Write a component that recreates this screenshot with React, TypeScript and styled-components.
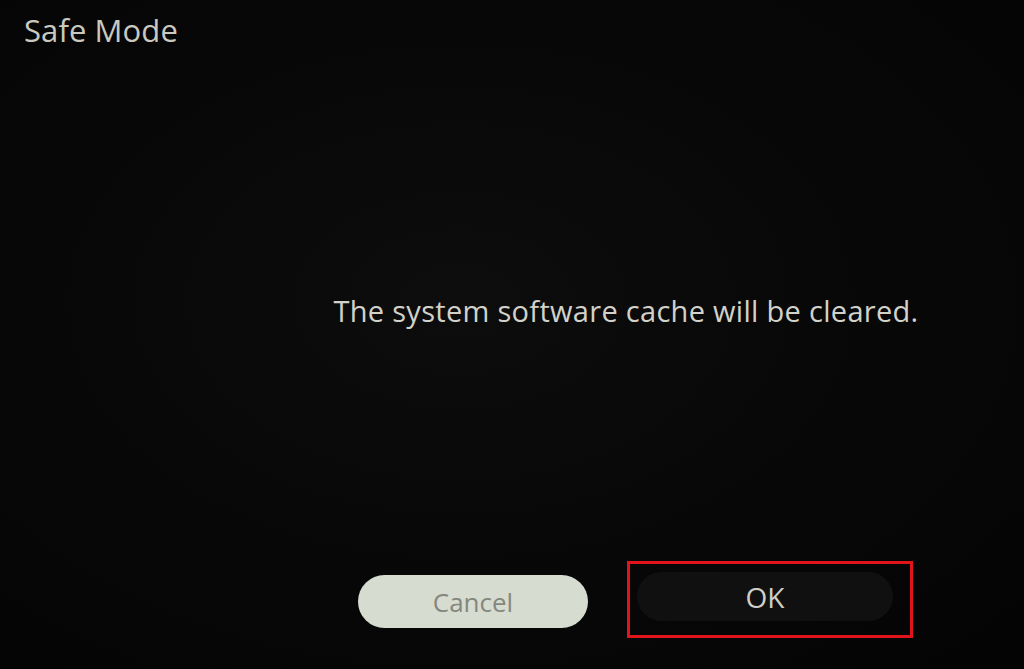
import React from "react"
import styled, { createGlobalStyle } from "styled-components"

const GlobalStyle = createGlobalStyle`
  html, body {
    margin: 0;
    padding: 0;
    background: #060606;
  }
  body {
    font-family: "Open Sans", "Noto Sans", sans-serif;
  }
`

const Screen = styled.div`
  position: relative;
  width: 1024px;
  height: 669px;
  overflow: hidden;
  background: radial-gradient(ellipse at 45% 45%, #0d0d0d 0%, #080808 45%, #040404 100%);
  display: grid;
  grid-template-columns: 228px 1fr;
  grid-template-rows: 64px 1fr;
`

const Title = styled.h1`
  grid-column: 1 / span 2;
  margin: 0;
  padding: 9px 0 0 24px;
  font-size: 31px;
  line-height: 1.362;
  font-weight: 400;
  color: #c9c9c0;
  letter-spacing: 0.1px;
`

const Body = styled.div`
  grid-column: 2;
  display: flex;
  flex-direction: column;
  align-items: center;
`

const Message = styled.p`
  margin: 227px 0 0;
  font-size: 29px;
  line-height: 1.362;
  font-weight: 400;
  color: #d2d2ca;
  letter-spacing: 0.3px;
`

const Actions = styled.div`
  margin-top: 231px;
  margin-left: 19px;
  display: flex;
  align-items: flex-start;
  gap: 39px;
`

const Button = styled.button<{ $primary?: boolean }>`
  border: none;
  border-radius: 28px;
  font-family: inherit;
  font-weight: 400;
  display: flex;
  align-items: center;
  justify-content: center;
  padding: 0;
  font-size: ${p => (p.$primary ? "28px" : "26px")};
  background: ${p => (p.$primary ? "#0f100f" : "#d6dcd0")};
  color: ${p => (p.$primary ? "#cfcfc8" : "#85877f")};
  width: ${p => (p.$primary ? "256px" : "230px")};
  height: ${p => (p.$primary ? "49px" : "53px")};
  margin-top: ${p => (p.$primary ? "0" : "14px")};
`

// red outline drawn round the focused button
const Highlight = styled.div`
  border: 3px solid #e0141a;
  padding: 8px 17px 14px 7px;
`

export default function App() {
  return (
    <>
      <GlobalStyle />
      <Screen>
        <Title>Safe Mode</Title>
        <Body>
          <Message>The system software cache will be cleared.</Message>
          <Actions>
            <Button>Cancel</Button>
            <Highlight>
              <Button $primary>OK</Button>
            </Highlight>
          </Actions>
        </Body>
      </Screen>
    </>
  )
}
